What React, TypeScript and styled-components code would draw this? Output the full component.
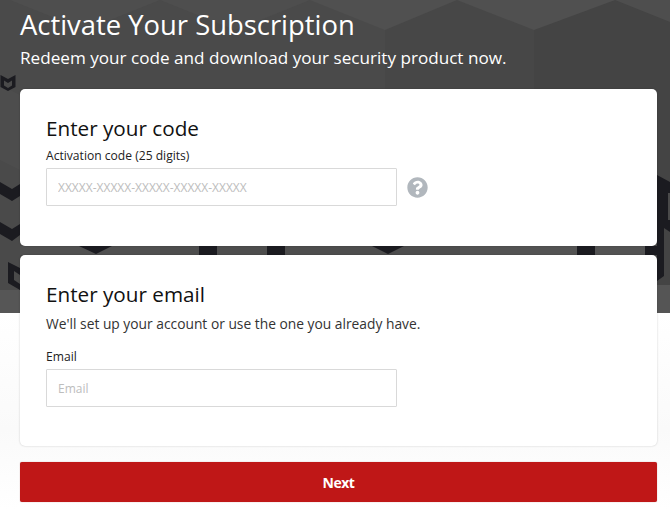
import React from "react";
import styled, { createGlobalStyle } from "styled-components";
import { FaQuestionCircle } from "react-icons/fa";

const Global = createGlobalStyle`
  html, body { margin: 0; padding: 0; background: #fff; }
  body { font-family: "Open Sans", "Liberation Sans", sans-serif; overflow: hidden; }
`;

const Page = styled.div`
  position: relative;
  width: 670px;
  height: 510px;
  overflow: hidden;
  background: linear-gradient(#fff 312px, #fafafa 430px, #fff 510px);
`;

const HeroArt = styled.svg`
  position: absolute;
  left: 0;
  top: 0;
  width: 670px;
  height: 313px;
`;

const Content = styled.main`
  position: relative;
  display: flex;
  flex-direction: column;
  padding: 6px 13px 0 20px;
`;

const Title = styled.h1`
  margin: 0 0 2px;
  font-size: 27.4px;
  line-height: 38px;
  font-weight: 400;
  color: #fff;
`;

const Subtitle = styled.p`
  margin: 0 0 19px;
  font-size: 17.14px;
  line-height: 24px;
  font-weight: 400;
  color: #fff;
`;

const Card = styled.section<{ $height: number; $gap: number }>`
  box-sizing: border-box;
  height: ${(p) => p.$height}px;
  margin-bottom: ${(p) => p.$gap}px;
  padding: 24px 26px 0;
  background: #fff;
  border-radius: 5px;
  box-shadow: 0 0 2px rgba(0, 0, 0, 0.22);
`;

const CardTitle = styled.h2`
  margin: 0;
  font-size: 20.7px;
  line-height: 30px;
  font-weight: 400;
  color: #111;
`;

const Note = styled.p`
  margin: 5px 0 14px;
  font-size: 13.8px;
  line-height: 20px;
  color: #333;
`;

const Label = styled.label<{ $top?: number }>`
  display: block;
  margin-top: ${(p) => p.$top ?? 0}px;
  font-size: 12.1px;
  line-height: 18px;
  color: #222;
`;

const FieldRow = styled.div`
  display: flex;
  align-items: center;
  gap: 10px;
  margin-top: 3px;
`;

const Input = styled.input`
  box-sizing: border-box;
  width: 351px;
  height: 38px;
  padding: 0 11px;
  border: 1px solid #d9d9d9;
  border-radius: 1px;
  background: #fff;
  font-family: inherit;
  font-size: 12px;
  outline: none;
  &::placeholder { color: #bdbdbd; opacity: 1; }
`;

const HelpIcon = styled(FaQuestionCircle)`
  width: 21px;
  height: 21px;
  flex: none;
  color: #b1b7bd;
`;

const NextButton = styled.button`
  height: 40px;
  border: none;
  border-radius: 2px;
  background: #bf1717;
  color: #fff;
  font-family: inherit;
  font-size: 14px;
  font-weight: 700;
  letter-spacing: -0.5px;
  box-shadow: 0 0 1px rgba(120, 0, 0, 0.5);
`;

const facets: [string, string][] = [
  ["0,0 385,0 385,313 0,313", "#4a4a4a"],
  ["385,0 534,0 534,313 385,313", "#474747"],
  ["534,0 670,0 670,313 534,313", "#444444"],
  ["10,0 85,30 160,0", "#4e4e4e"],
  ["160,0 235,30 310,0", "#4e4e4e"],
  ["310,0 385,30 457,0", "#505050"],
  ["457,0 534,30 615,0", "#505050"],
  ["615,0 670,22 670,0", "#4e4e4e"],
  ["0,85 20,95 20,170 0,160", "#4d4d4d"],
  ["160,246 460,246 460,255 160,255", "#4d4d4d"],
  ["460,246 646,246 646,255 460,255", "#535353"],
  ["20,246 160,246 160,255 20,255", "#505050"],
  ["0,290 20,290 20,313 0,313", "#565656"],
  ["657,285 670,285 670,313 657,313", "#555555"],
];

const shapes: string[] = [
  "0,182 12,189 20,184 20,196 12,201 0,194",
  "0,222 12,229 20,224 20,235 12,241 0,234",
  "79,246 112,246 96,254",
  "372,246 404,246 388,254",
  "199,246 217,246 217,255 199,255",
  "267,246 285,246 285,255 267,255",
  "577,246 595,246 595,255 577,255",
  "645,246 657,246 657,255 645,255",
  "657,175 670,182 670,232 664,228 664,276 657,281",
  "8,262 20,268 20,275 14,271 14,280 20,284 20,290 8,283",
];

export default function App() {
  return (
    <Page>
      <Global />
      <HeroArt viewBox="0 0 670 313" aria-hidden="true">
        {facets.map(([points, fill]) => (
          <polygon key={points} points={points} fill={fill} />
        ))}
        {shapes.map((points) => (
          <polygon key={points} points={points} fill="#1b1b20" />
        ))}
        <rect x="668" y="193" width="2" height="27" fill="#4a4a4a" />
        <path
          transform="translate(0.5 75)"
          d="M0 0 L7.5 4 L15 0 L15 12 L7.5 16 L0 12 Z M3.5 5.5 L3.5 10.5 L7.5 13 L11.5 10.5 L11.5 5.5 L7.5 8 Z"
          fill="#1b1b20"
          fillRule="evenodd"
        />
      </HeroArt>
      <Content>
        <Title>Activate Your Subscription</Title>
        <Subtitle>Redeem your code and download your security product now.</Subtitle>
        <Card $height={157} $gap={9}>
          <CardTitle>Enter your code</CardTitle>
          <Label $top={4}>Activation code (25 digits)</Label>
          <FieldRow>
            <Input placeholder="XXXXX-XXXXX-XXXXX-XXXXX-XXXXX" readOnly />
            <HelpIcon aria-label="Help" />
          </FieldRow>
        </Card>
        <Card $height={191} $gap={16}>
          <CardTitle>Enter your email</CardTitle>
          <Note>We'll set up your account or use the one you already have.</Note>
          <Label>Email</Label>
          <FieldRow>
            <Input placeholder="Email" readOnly />
          </FieldRow>
        </Card>
        <NextButton type="button">Next</NextButton>
      </Content>
    </Page>
  );
}
